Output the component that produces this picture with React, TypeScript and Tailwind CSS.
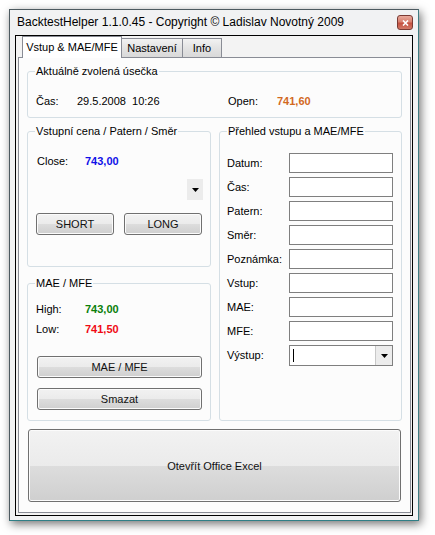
import React from 'react';

const font = "font-['Liberation_Sans',Arial,sans-serif]";

function Group({
  title,
  className = '',
  children,
}: {
  title: string;
  className?: string;
  children?: React.ReactNode;
}) {
  return (
    <fieldset className={`flex flex-col rounded-[3px] border border-[#d5dfe5] px-[7px] ${className}`}>
      <legend className="px-[1px] text-[11px] leading-[13px] text-black">{title}</legend>
      {children}
    </fieldset>
  );
}

function Button({ label, className = '' }: { label: string; className?: string }) {
  return (
    <button
      className={`flex items-center justify-center rounded-[3px] border border-[#707070] bg-[linear-gradient(to_bottom,#f2f2f2_0%,#ebebeb_50%,#dddddd_50%,#cfcfcf_100%)] text-[11px] font-normal leading-[13px] text-[#111] shadow-[inset_0_0_0_1px_#fbfbfb] ${className}`}
    >
      {label}
    </button>
  );
}

function Field({ label }: { label: string }) {
  return (
    <div className="flex h-[20px] items-center">
      <span className="w-[62px] text-[11px] leading-[13px]">{label}</span>
      <div className="h-[20px] w-[104px] border border-[#7f7f7f] bg-white" />
    </div>
  );
}

function Arrow() {
  return (
    <svg width="7" height="4" viewBox="0 0 7 4">
      <path d="M0 0h7L3.5 4z" fill="#000" />
    </svg>
  );
}

export default function App() {
  return (
    <div className={`h-[535px] w-[435px] bg-white pl-[9px] pt-[9px] text-black ${font}`}>
      <div className="flex h-[512px] w-[410px] flex-col border border-[#4d5a60] border-b-[#2f7f86] border-r-[#3f7c82] bg-[#f1f2f3] shadow-[2px_3px_9px_rgba(0,0,0,0.55)]">
        {/* title bar */}
        <div className="flex h-[25px] items-start justify-between pl-[7px] pr-[5px]">
          <span className="mt-[5px] text-[12px] leading-[15px]">
            BacktestHelper 1.1.0.45 - Copyright © Ladislav Novotný 2009
          </span>
          <div className="mt-[5px] flex h-[15px] w-[16px] items-center justify-center rounded-[3px] border border-[#7a3a33] bg-[linear-gradient(to_bottom,#e9a99b_0%,#d7806f_45%,#c4503f_55%,#d37a68_100%)]">
            <svg width="7" height="6" viewBox="0 0 7 6">
              <path d="M1 0.5l5 5M6 0.5l-5 5" stroke="#fff" strokeWidth="1.6" />
            </svg>
          </div>
        </div>

        {/* client area */}
        <div className="mx-[5px] flex h-[481px] flex-col border border-black bg-[#f3f3f3]">
          {/* tabs */}
          <div className="flex h-[21px] items-end pl-[6px] text-[11px] leading-[13px]">
            <div className="relative z-10 -mb-[1px] flex h-[22px] w-[100px] items-center justify-center border border-b-0 border-[#898c95] bg-white">
              Vstup &amp; MAE/MFE
            </div>
            <div className="-ml-[1px] flex h-[19px] w-[62px] items-center justify-center border border-b-0 border-[#898c95] bg-[linear-gradient(to_bottom,#f2f2f2,#e3e3e3_50%,#d9d9d9)]">
              Nastavení
            </div>
            <div className="-ml-[1px] flex h-[19px] w-[40px] items-center justify-center border border-b-0 border-[#898c95] bg-[linear-gradient(to_bottom,#f2f2f2,#e3e3e3_50%,#d9d9d9)]">
              Info
            </div>
          </div>

          {/* tab page */}
          <div className="ml-[2px] mr-[1px] flex h-[456px] flex-col border border-[#898c95] bg-[#fcfcfc] px-[8px] pt-[7px]">
            <Group title="Aktuálně zvolená úsečka" className="h-[53px]">
              <div className="mt-[17px] flex pl-[1px] text-[11px] leading-[13px]">
                <span className="w-[41px]">Čas:</span>
                <span className="w-[151px]">29.5.2008&nbsp;&nbsp;10:26</span>
                <span className="w-[49px]">Open:</span>
                <span className="font-bold text-[#d2691e]">741,60</span>
              </div>
            </Group>

            <div className="mt-[7px] grid grid-cols-[184px_183px] gap-x-[8px]">
              <div className="flex flex-col gap-[10px]">
                <Group title="Vstupní cena / Patern / Směr" className="h-[142px]">
                  <div className="mt-[17px] flex pl-[2px] text-[11px] leading-[13px]">
                    <span className="w-[48px]">Close:</span>
                    <span className="font-bold text-[#1010e8]">743,00</span>
                  </div>
                  <div className="mt-[11px] flex h-[21px] w-[16px] items-center justify-center self-end bg-[#ececec]">
                    <Arrow />
                  </div>
                  <div className="mt-[13px] flex gap-[10px] pl-[1px]">
                    <Button label="SHORT" className="h-[22px] w-[78px]" />
                    <Button label="LONG" className="h-[22px] w-[78px]" />
                  </div>
                </Group>

                <Group title="MAE / MFE" className="h-[144px]">
                  <div className="mt-[13px] flex flex-col gap-[7px] pl-[1px] text-[11px] leading-[13px]">
                    <div className="flex">
                      <span className="w-[49px]">High:</span>
                      <span className="font-bold text-[#0a800a]">743,00</span>
                    </div>
                    <div className="flex">
                      <span className="w-[49px]">Low:</span>
                      <span className="font-bold text-[#f00a14]">741,50</span>
                    </div>
                  </div>
                  <Button label="MAE / MFE" className="ml-[2px] mt-[20px] h-[22px] w-[165px]" />
                  <Button label="Smazat" className="ml-[2px] mt-[10px] h-[22px] w-[165px]" />
                </Group>
              </div>

              <Group title="Přehled vstupu a MAE/MFE" className="h-[296px]">
                <div className="mt-[15px] flex flex-col gap-[4px]">
                  <Field label="Datum:" />
                  <Field label="Čas:" />
                  <Field label="Patern:" />
                  <Field label="Směr:" />
                  <Field label="Poznámka:" />
                  <Field label="Vstup:" />
                  <Field label="MAE:" />
                  <Field label="MFE:" />
                  <div className="flex h-[21px] items-center">
                    <span className="w-[62px] text-[11px] leading-[13px]">Výstup:</span>
                    <div className="flex h-[21px] w-[104px] border border-[#7f7f7f] bg-white">
                      <div className="flex flex-1 items-center pl-[3px]">
                        <div className="h-[13px] w-[1px] bg-black" />
                      </div>
                      <div className="flex w-[17px] items-center justify-center border-l border-[#c8c8c8] bg-[#ececec]">
                        <Arrow />
                      </div>
                    </div>
                  </div>
                </div>
              </Group>
            </div>

            <Button label="Otevřít Office Excel" className="mx-[1px] mt-[8px] h-[73px] pt-[1px]" />
          </div>
        </div>
      </div>
    </div>
  );
}
